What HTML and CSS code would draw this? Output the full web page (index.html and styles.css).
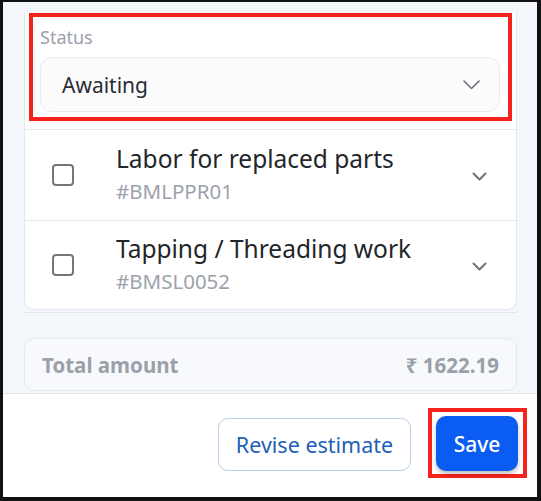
FILE: index.html
```html
<!DOCTYPE html>
<html lang="en">
<head>
<meta charset="utf-8">
<link rel="stylesheet" href="styles.css">
</head>
<body>
<div class="frame">
  <div class="content">
    <div class="card-wrap">
      <div class="card">
        <div class="status-box">
          <div class="status-label">Status</div>
          <div class="select">
            <span class="select-value">Awaiting</span>
            <svg class="chev-select" width="17" height="10" viewBox="0 0 17 10"><path d="M1 1 L8.5 8.5 L16 1" fill="none" stroke="#6c717a" stroke-width="1.6" stroke-linecap="round" stroke-linejoin="round"/></svg>
          </div>
        </div>
        <div class="rows">
          <div class="row">
            <span class="checkbox"></span>
            <div class="row-text">
              <div class="row-title">Labor for replaced parts</div>
              <div class="row-code">#BMLPPR01</div>
            </div>
            <svg class="chev-row" width="15" height="9" viewBox="0 0 15 9"><path d="M1.5 1.5 L7.5 7.5 L13.5 1.5" fill="none" stroke="#6c717a" stroke-width="2" stroke-linecap="round" stroke-linejoin="round"/></svg>
          </div>
          <div class="row">
            <span class="checkbox"></span>
            <div class="row-text">
              <div class="row-title">Tapping / Threading work</div>
              <div class="row-code">#BMSL0052</div>
            </div>
            <svg class="chev-row" width="15" height="9" viewBox="0 0 15 9"><path d="M1.5 1.5 L7.5 7.5 L13.5 1.5" fill="none" stroke="#6c717a" stroke-width="2" stroke-linecap="round" stroke-linejoin="round"/></svg>
          </div>
        </div>
      </div>
    </div>
    <div class="total">
      <span class="total-label">Total amount</span>
      <span class="total-value">₹ 1622.19</span>
    </div>
  </div>
  <div class="footer">
    <button class="btn-outline">Revise estimate</button>
    <div class="highlight-save">
      <button class="btn-primary">Save</button>
    </div>
  </div>
</div>
</body>
</html>
```
FILE: styles.css
```css
* { box-sizing: border-box; }
html, body { margin: 0; padding: 0; }
body {
  font-family: "Noto Sans", "Open Sans", sans-serif;
  background: #fff;
}
.frame {
  width: 541px;
  height: 501px;
  border-style: solid;
  border-color: #111;
  border-width: 2px 4px 4px 3px;
  background: #f3f6fb;
  display: flex;
  flex-direction: column;
  overflow: hidden;
}
.content {
  padding: 0 20px 0 21px;
}
.card-wrap {
  padding-bottom: 2px;
  border-bottom: 1px solid #e2e5ea;
}
.card {
  background: #fff;
  border: 1px solid #e4e7ec;
  border-top: none;
  border-radius: 0 0 10px 10px;
}
.status-box {
  margin: 11px 4px 0 4px;
  border: 4px solid #f5231b;
  padding: 10px 8px 5px 7px;
}
.status-label {
  font-size: 18px;
  line-height: 20px;
  color: #9aa1ab;
}
.select {
  margin-top: 10px;
  height: 55px;
  border: 1px solid #e8eaee;
  border-radius: 12px;
  background: #fcfcfd;
  display: flex;
  align-items: center;
  justify-content: space-between;
  padding: 0 19px 0 21px;
}
.select-value {
  font-size: 21px;
  color: #2a2d33;
}
.rows {
  margin-top: 8px;
  border-top: 1px solid #e6e8ec;
}
.row {
  height: 90px;
  display: flex;
  align-items: center;
  padding: 0 29px 0 27px;
}
.row + .row {
  border-top: 1px solid #e6e8ec;
  height: 89px;
}
.checkbox {
  width: 22px;
  height: 22px;
  border: 2.5px solid #72777f;
  border-radius: 4px;
  flex: none;
}
.row-text {
  flex: 1;
  margin-left: 42px;
  padding-bottom: 2px;
}
.row-title {
  font-size: 24.5px;
  line-height: 30px;
  color: #232629;
}
.row-code {
  font-size: 20.5px;
  line-height: 26px;
  color: #9ca2ab;
  margin-top: 4px;
}
.chev-row { flex: none; margin-top: 2px; }
.total {
  margin-top: 25px;
  height: 53px;
  border: 1px solid #e4e8ee;
  border-radius: 10px;
  background: #f7f9fc;
  display: flex;
  align-items: center;
  justify-content: space-between;
  padding: 0 17px 0 17px;
  font-size: 20.5px;
  font-weight: 700;
  color: #9aa0a9;
}
.footer {
  margin-top: 2px;
  flex: 1;
  background: #fff;
  border-top: 1px solid #e2e5ea;
  display: flex;
  justify-content: flex-end;
  align-items: flex-start;
  padding: 14px 10px 0 0;
  gap: 17px;
}
.btn-outline {
  margin-top: 10px;
  width: 193px;
  height: 53px;
  border: 1px solid #b8cfe9;
  border-radius: 10px;
  background: #fff;
  color: #2260b6;
  font-family: inherit;
  font-size: 21.5px;
  padding: 0;
}
.highlight-save {
  border: 4px solid #f5231b;
  padding: 4px 5px 3px 4px;
}
.btn-primary {
  display: block;
  width: 82px;
  height: 55px;
  border: none;
  border-radius: 10px;
  background: #0a5cf2;
  color: #fff;
  font-family: inherit;
  font-size: 21px;
  font-weight: 500;
  padding: 0;
  box-shadow: 0 3px 4px rgba(0, 0, 0, 0.25);
}
```
